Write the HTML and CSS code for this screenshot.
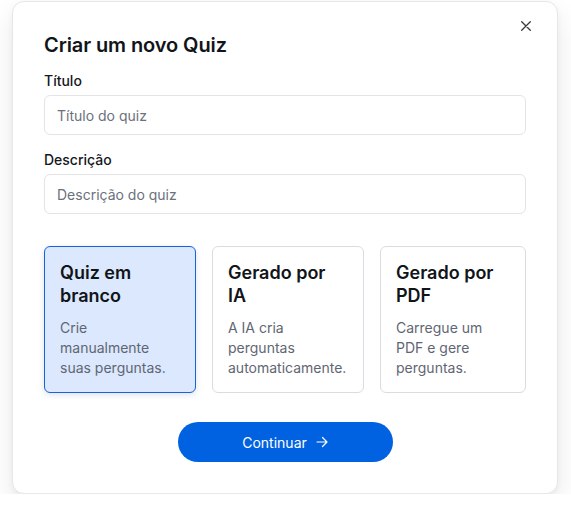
FILE: index.html
```html
<!DOCTYPE html>
<html lang="pt">
<head>
<meta charset="utf-8">
<title>Criar um novo Quiz</title>
<link rel="stylesheet" href="styles.css">
</head>
<body>
<div class="modal">
  <button class="close" aria-label="Fechar">
    <svg width="10" height="10" viewBox="0 0 10 10"><path d="M0.7 0.7L9.3 9.3M9.3 0.7L0.7 9.3" stroke="#3a3a3a" stroke-width="1.3" stroke-linecap="round"/></svg>
  </button>
  <h1 class="title">Criar um novo Quiz</h1>
  <div class="field">
    <label class="label">Título</label>
    <div class="input">Título do quiz</div>
  </div>
  <div class="field">
    <label class="label">Descrição</label>
    <div class="input">Descrição do quiz</div>
  </div>
  <div class="options">
    <div class="card selected">
      <div class="card-title">Quiz em branco</div>
      <div class="card-desc">Crie manualmente suas perguntas.</div>
    </div>
    <div class="card">
      <div class="card-title">Gerado por IA</div>
      <div class="card-desc">A IA cria perguntas automaticamente.</div>
    </div>
    <div class="card">
      <div class="card-title">Gerado por PDF</div>
      <div class="card-desc">Carregue um PDF e gere perguntas.</div>
    </div>
  </div>
  <div class="actions">
    <button class="primary">Continuar
      <svg width="12" height="12" viewBox="0 0 12 12"><path d="M1 6H11M6.5 1.5L11 6L6.5 10.5" stroke="#fff" stroke-width="1.2" fill="none" stroke-linecap="round" stroke-linejoin="round"/></svg>
    </button>
  </div>
</div>
</body>
</html>
```

FILE: styles.css
```css
* { box-sizing: border-box; }
html, body { margin: 0; padding: 0; background: #ffffff; }
body {
  font-family: Inter, "Noto Sans", sans-serif;
  color: #111418;
}
.modal {
  position: relative;
  width: 546px;
  height: 493px;
  margin: 1px 0 0 12px;
  background: #fff;
  border: 1px solid #e6e7ea;
  border-radius: 12px;
  box-shadow: 0 12px 28px rgba(0,0,0,0.09), 0 2px 6px rgba(0,0,0,0.04);
  padding: 29px 31px 31px 31px;
}
.close {
  position: absolute;
  top: 18px;
  right: 25px;
  width: 12px;
  height: 12px;
  padding: 1px;
  border: 0;
  background: none;
  display: flex;
  align-items: center;
  justify-content: center;
}
.title {
  margin: 0 0 12px;
  font-size: 20px;
  line-height: 28px;
  font-weight: 600;
  letter-spacing: -0.1px;
}
.field { display: flex; flex-direction: column; gap: 4px; margin-bottom: 15px; }
.field + .field { margin-bottom: 0; }
.label {
  font-size: 14px;
  line-height: 20px;
  font-weight: 500;
  color: #15181d;
}
.input {
  height: 40px;
  border: 1px solid #e2e4e8;
  border-radius: 6px;
  padding: 0 12px;
  display: flex;
  align-items: center;
  font-size: 14px;
  color: #6b717c;
}
.options {
  display: grid;
  grid-template-columns: 152px 152px 1fr;
  gap: 16px;
  margin-top: 32px;
}
.card {
  border: 1px solid #d9dce1;
  border-radius: 6px;
  padding: 15px 15px 14px 15px;
  background: #fff;
}
.card.selected {
  background: #dbe8fd;
  border-color: #1463e0;
  box-shadow: 0 2px 6px rgba(0,0,0,0.12);
}
.card-title {
  font-size: 18px;
  line-height: 22.5px;
  font-weight: 600;
  color: #111418;
  margin-bottom: 11px;
}
.card-desc {
  font-size: 14px;
  line-height: 20px;
  color: #5f6673;
}
.actions {
  display: flex;
  justify-content: center;
  margin-top: 29px;
}
.primary {
  width: 215px;
  height: 40px;
  border: 0;
  border-radius: 20px;
  background: #0062e1;
  color: #fff;
  font-family: inherit;
  font-size: 14px;
  font-weight: 400;
  display: flex;
  align-items: center;
  justify-content: center;
  gap: 9px;
}
```
